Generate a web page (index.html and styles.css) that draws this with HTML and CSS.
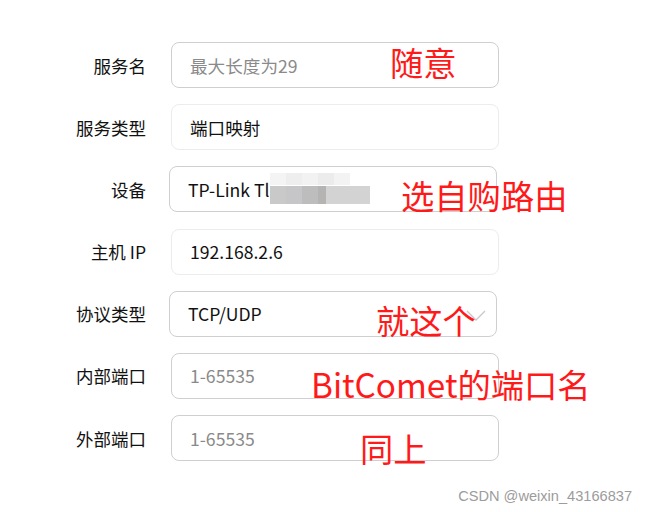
FILE: index.html
```html
<!DOCTYPE html>
<html lang="zh-CN">
<head>
  <meta charset="UTF-8" />
  <title>端口映射</title>
  <link rel="stylesheet" href="styles.css">
</head>
<body>

  <div class="form">
    <div class="row">
      <label class="label">服务名</label>
      <div class="field placeholder">最大长度为29</div>
      <span class="note note-1">随意</span>
    </div>

    <div class="row">
      <label class="label">服务类型</label>
      <div class="field readonly">端口映射</div>
    </div>

    <div class="row">
      <label class="label">设备</label>
      <div class="field select">TP-Link Tl<span class="mosaic"></span></div>
      <span class="note note-3">选自购路由</span>
    </div>

    <div class="row">
      <label class="label">主机 IP</label>
      <div class="field readonly">192.168.2.6</div>
    </div>

    <div class="row">
      <label class="label">协议类型</label>
      <div class="field select">TCP/UDP
        <svg class="chevron" width="20" height="11" viewBox="0 0 20 11">
          <path d="M1 1 L10 10 L19 1" fill="none" stroke="#c8c8c8" stroke-width="1.3"/>
        </svg>
      </div>
      <span class="note note-5">就这个</span>
    </div>

    <div class="row">
      <label class="label">内部端口</label>
      <div class="field placeholder">1-65535</div>
      <span class="note note-6">BitComet的端口名</span>
    </div>

    <div class="row">
      <label class="label">外部端口</label>
      <div class="field placeholder">1-65535</div>
      <span class="note note-7">同上</span>
    </div>
  </div>

  <div class="watermark">CSDN @weixin_43166837</div>

</body>
</html>
```

FILE: styles.css
```css
body {
  margin: 0;
  background-color: #ffffff;
  font-family: "Noto Sans CJK SC", "Noto Sans", sans-serif;
  color: #1a1a1a;
  width: 646px;
  height: 512px;
  position: relative;
  overflow: hidden;
}

.form {
  padding-top: 42px;
  display: flex;
  flex-direction: column;
  gap: 16.2px;
}

.row {
  position: relative;
  display: grid;
  grid-template-columns: 146px 328px;
  column-gap: 25px;
  align-items: center;
  height: 46px;
}

.label {
  text-align: right;
  font-size: 17.5px;
  color: #111;
}

.field {
  box-sizing: border-box;
  height: 46px;
  border: 1px solid #cfcfcf;
  border-radius: 8px;
  padding-left: 18px;
  display: flex;
  align-items: center;
  font-size: 17.6px;
  color: #111;
  position: relative;
}

.placeholder { color: #8a8a8a; }

.readonly { border-color: #ececec; }

.select {
  margin-left: -2px;
  width: 328px;
}

.chevron {
  position: absolute;
  right: 10px;
  top: 18px;
}

.mosaic {
  position: absolute;
  left: 100px;
  top: 6px;
  width: 100px;
  height: 31px;
  background:
    linear-gradient(90deg, #f4f4f4 0 16%, #eeeeee 16% 32%, #f2f2f2 32% 48%, #ececec 48% 64%, #f3f3f3 64% 80%, #ffffff 80%) top / 100% 40% no-repeat,
    linear-gradient(90deg, #c9c9c9 0 16%, #c6c6c9 16% 32%, #bdbdbd 32% 48%, #b5b4b2 48% 56%, #d3d3d3 56% 100%) bottom / 100% 60% no-repeat;
  filter: blur(0.6px);
}

.note {
  position: absolute;
  color: #ff1a1a;
  font-size: 33.3px;
  line-height: 1;
  white-space: nowrap;
}

.note-1 { left: 390px; top: 3px; }
.note-3 { left: 401px; top: 12px; }
.note-5 { left: 376px; top: 12px; }
.note-6 { left: 311px; top: 14px; }
.note-7 { left: 360px; top: 16px; }

.watermark {
  position: absolute;
  right: 14px;
  bottom: 8px;
  font-family: "Liberation Sans", Arial, sans-serif;
  font-size: 14.6px;
  color: #9c9c9c;
}
```
